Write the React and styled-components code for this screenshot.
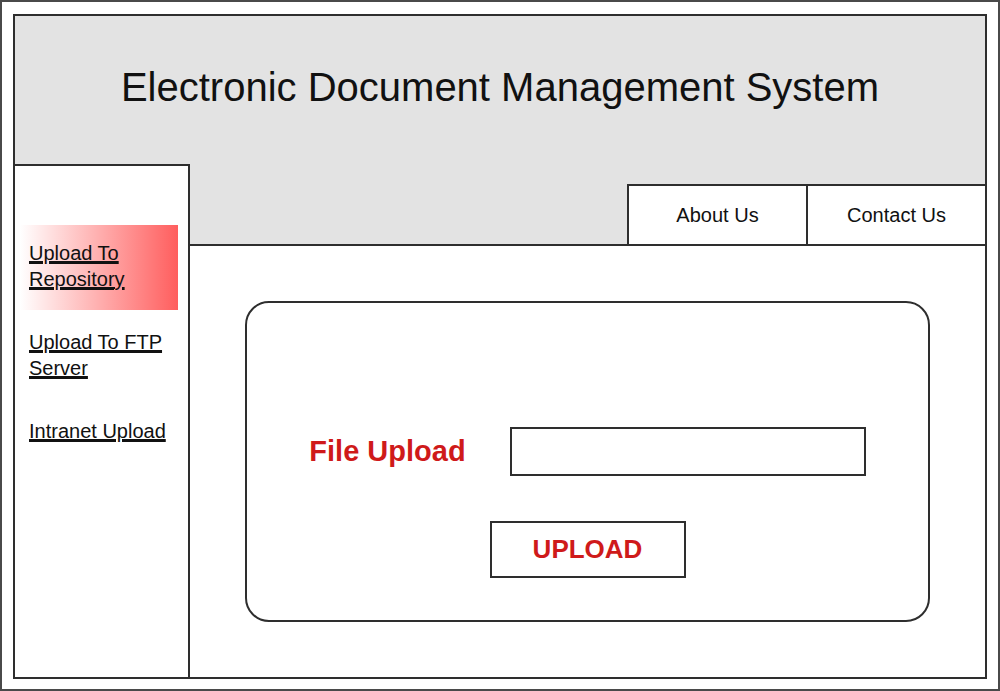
import styled, { createGlobalStyle } from "styled-components";

const GlobalStyle = createGlobalStyle`
  * { box-sizing: border-box; }
  body {
    margin: 0;
    font-family: "Liberation Sans", Arial, sans-serif;
    background: #fff;
  }
`;

const line = "2px solid #2e2e2e";

const menu = [
  { label: ["Upload To", "Repository"], active: true },
  { label: ["Upload To FTP", "Server"] },
  { label: ["Intranet Upload"] },
];

export default function App() {
  return (
    <>
      <GlobalStyle />
      <Page>
        <Frame>
          <Header>
            <Title>Electronic Document Management System</Title>
          </Header>
          <Body>
            <Sidebar>
              {menu.map((item, i) => (
                <MenuItem key={i} $active={item.active}>
                  <MenuLink href="#">
                    {item.label.map((text, j) => (
                      <span key={j}>{text}</span>
                    ))}
                  </MenuLink>
                </MenuItem>
              ))}
            </Sidebar>
            <Content>
              <NavRow>
                <NavItem>About Us</NavItem>
                <NavItem>Contact Us</NavItem>
              </NavRow>
              <Main>
                <Card>
                  <UploadRow>
                    <FieldLabel>File Upload</FieldLabel>
                    <FileInput type="text" />
                  </UploadRow>
                  <UploadButton>UPLOAD</UploadButton>
                </Card>
              </Main>
            </Content>
          </Body>
        </Frame>
      </Page>
    </>
  );
}

const Page = styled.div`
  width: 1000px;
  height: 691px;
  border: 2px solid #4a4a4a;
  padding: 12px 11px 10px 11px;
  display: flex;
`;

const Frame = styled.div`
  flex: 1;
  display: flex;
  flex-direction: column;
  border: ${line};
  background: #e3e3e3;
`;

const Header = styled.header`
  height: 148px;
  display: flex;
  align-items: center;
  justify-content: center;
  padding-bottom: 6px;
`;

const Title = styled.h1`
  margin: 0;
  font-weight: normal;
  font-size: 40px;
  color: #111;
`;

const Body = styled.div`
  flex: 1;
  display: flex;
`;

const Sidebar = styled.nav`
  width: 175px;
  background: #fff;
  border-top: ${line};
  border-right: ${line};
  padding: 59px 10px 0 5px;
  display: flex;
  flex-direction: column;
  gap: 4px;
`;

const MenuItem = styled.div`
  padding: 15px 9px 18px;
  background: ${(p) =>
    p.$active ? "linear-gradient(to right, #ffffff 0%, #ff5e5e 100%)" : "transparent"};
`;

const MenuLink = styled.a`
  display: flex;
  flex-direction: column;
  color: #111;
  font-size: 20px;
  line-height: 26px;

  span {
    text-decoration: underline;
    text-underline-offset: 3px;
    text-decoration-thickness: 1px;
  }
`;

const Content = styled.div`
  flex: 1;
  display: flex;
  flex-direction: column;
`;

const NavRow = styled.div`
  display: flex;
  justify-content: flex-end;
  padding-top: 20px;
  border-bottom: ${line};
`;

const NavItem = styled.div`
  width: 179px;
  height: 60px;
  background: #fff;
  border-top: ${line};
  border-left: ${line};
  display: flex;
  align-items: center;
  justify-content: center;
  font-size: 20px;
  color: #111;
`;

const Main = styled.main`
  flex: 1;
  background: #fff;
  padding: 55px;
  display: flex;
`;

const Card = styled.section`
  flex: 1;
  border: ${line};
  border-radius: 24px;
  display: flex;
  flex-direction: column;
  align-items: center;
  justify-content: flex-end;
  gap: 45px;
  padding-bottom: 42px;
`;

const UploadRow = styled.div`
  display: flex;
  align-items: center;
  gap: 44px;
`;

const FieldLabel = styled.label`
  font-size: 29px;
  font-weight: bold;
  color: #cf1a1a;
`;

const FileInput = styled.input`
  width: 356px;
  height: 49px;
  border: ${line};
  background: #fff;
  outline: none;
`;

const UploadButton = styled.button`
  width: 196px;
  height: 57px;
  border: ${line};
  background: #fff;
  font-family: "Liberation Sans", Arial, sans-serif;
  font-size: 26px;
  font-weight: bold;
  color: #cf1a1a;
  cursor: pointer;
`;
